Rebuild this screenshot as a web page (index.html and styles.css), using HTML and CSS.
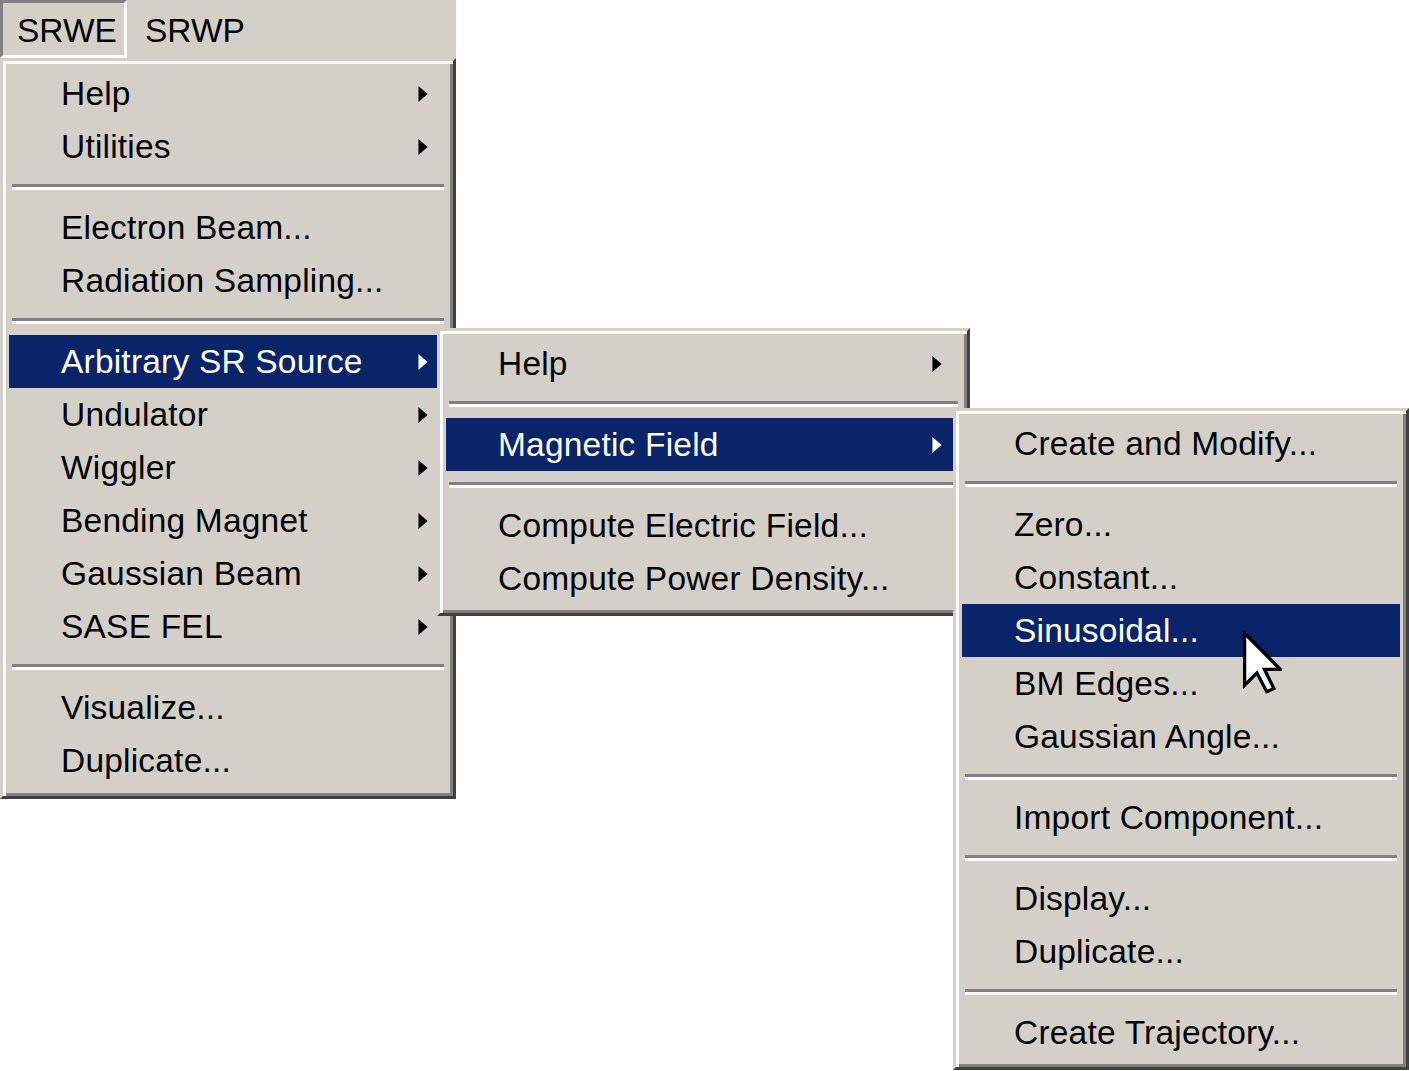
FILE: index.html
```html
<!DOCTYPE html>
<html>
<head>
<meta charset="utf-8">
<title>SRWE menu</title>
<link rel="stylesheet" href="styles.css">
</head>
<body>
<div class="screen">
  <div class="menubar">
    <span class="bar-item pressed">SRWE</span>
    <span class="bar-item">SRWP</span>
  </div>

  <div class="menu menu-main">
    <div class="item sub">Help<svg class="arrow" viewBox="0 0 4 7"><polygon points="0,0 4,3.5 0,7"/></svg></div>
    <div class="item sub">Utilities<svg class="arrow" viewBox="0 0 4 7"><polygon points="0,0 4,3.5 0,7"/></svg></div>
    <div class="sep"></div>
    <div class="item">Electron Beam...</div>
    <div class="item">Radiation Sampling...</div>
    <div class="sep"></div>
    <div class="item sub active">Arbitrary SR Source<svg class="arrow" viewBox="0 0 4 7"><polygon points="0,0 4,3.5 0,7"/></svg></div>
    <div class="item sub">Undulator<svg class="arrow" viewBox="0 0 4 7"><polygon points="0,0 4,3.5 0,7"/></svg></div>
    <div class="item sub">Wiggler<svg class="arrow" viewBox="0 0 4 7"><polygon points="0,0 4,3.5 0,7"/></svg></div>
    <div class="item sub">Bending Magnet<svg class="arrow" viewBox="0 0 4 7"><polygon points="0,0 4,3.5 0,7"/></svg></div>
    <div class="item sub">Gaussian Beam<svg class="arrow" viewBox="0 0 4 7"><polygon points="0,0 4,3.5 0,7"/></svg></div>
    <div class="item sub">SASE FEL<svg class="arrow" viewBox="0 0 4 7"><polygon points="0,0 4,3.5 0,7"/></svg></div>
    <div class="sep"></div>
    <div class="item">Visualize...</div>
    <div class="item">Duplicate...</div>
  </div>

  <div class="menu menu-source">
    <div class="item sub">Help<svg class="arrow" viewBox="0 0 4 7"><polygon points="0,0 4,3.5 0,7"/></svg></div>
    <div class="sep"></div>
    <div class="item sub active">Magnetic Field<svg class="arrow" viewBox="0 0 4 7"><polygon points="0,0 4,3.5 0,7"/></svg></div>
    <div class="sep"></div>
    <div class="item">Compute Electric Field...</div>
    <div class="item">Compute Power Density...</div>
  </div>

  <div class="menu menu-field">
    <div class="item">Create and Modify...</div>
    <div class="sep"></div>
    <div class="item">Zero...</div>
    <div class="item">Constant...</div>
    <div class="item active">Sinusoidal...</div>
    <div class="item">BM Edges...</div>
    <div class="item">Gaussian Angle...</div>
    <div class="sep"></div>
    <div class="item">Import Component...</div>
    <div class="sep"></div>
    <div class="item">Display...</div>
    <div class="item">Duplicate...</div>
    <div class="sep"></div>
    <div class="item">Create Trajectory...</div>
  </div>

  <svg class="cursor" viewBox="0 0 12 19">
    <polygon points="0.5,0.5 0.5,16.5 4.3,12.7 7.3,18.5 9.5,17.5 6.6,11.6 11.5,11.6"/>
  </svg>
</div>
</body>
</html>
```

FILE: styles.css
```css
html, body {
  margin: 0;
  padding: 0;
  background: #ffffff;
}

.screen {
  position: relative;
  width: 1409px;
  height: 1071px;
  overflow: hidden;
  font-family: "Liberation Sans", Arial, sans-serif;
  font-size: 33.5px;
  color: #000;
}

.menubar {
  display: flex;
  width: 456px;
  height: 58px;
  background: #d4d0c8;
}

.bar-item {
  display: block;
  box-sizing: border-box;
  height: 58px;
  padding: 4px 18px 0;
  line-height: 54px;
}

.bar-item.pressed {
  width: 127px;
  padding: 4px 0 0 14px;
  line-height: 48px;
  border: 3px solid;
  border-color: #808080 #ffffff #ffffff #808080;
}

.menu {
  box-sizing: border-box;
  background: #d4d0c8;
  border: 3px solid;
  border-color: #d4d0c8 #404040 #404040 #d4d0c8;
  box-shadow: inset 3px 3px 0 #ffffff, inset -3px -3px 0 #808080;
  padding: 6px 6px 8px;
}

.menu-main {
  width: 456px;
  padding-bottom: 9px;
}

.menu-source {
  position: absolute;
  left: 437px;
  top: 328px;
  width: 533px;
  z-index: 2;
}

.menu-field {
  position: absolute;
  left: 953px;
  top: 408px;
  width: 456px;
  z-index: 3;
}

.item {
  position: relative;
  height: 53px;
  line-height: 53px;
  padding-left: 52px;
  white-space: nowrap;
  letter-spacing: 0.2px;
}

.item.active {
  background: #0a246a;
  color: #ffffff;
}

.arrow {
  position: absolute;
  right: 18px;
  top: 19px;
  width: 12px;
  height: 16px;
  fill: #000;
}

.item.active .arrow {
  fill: #ffffff;
}

.sep {
  height: 6px;
  margin: 0 3px;
  padding: 11px 0;
  box-sizing: content-box;
  background:
    linear-gradient(#808080, #808080) 0 11px / 100% 3px no-repeat,
    linear-gradient(#ffffff, #ffffff) 0 14px / 100% 3px no-repeat;
}

.cursor {
  position: absolute;
  left: 1243px;
  top: 631px;
  width: 39px;
  height: 63px;
  z-index: 5;
  fill: #ffffff;
  stroke: #000000;
  stroke-width: 1;
  stroke-linejoin: miter;
}
```
